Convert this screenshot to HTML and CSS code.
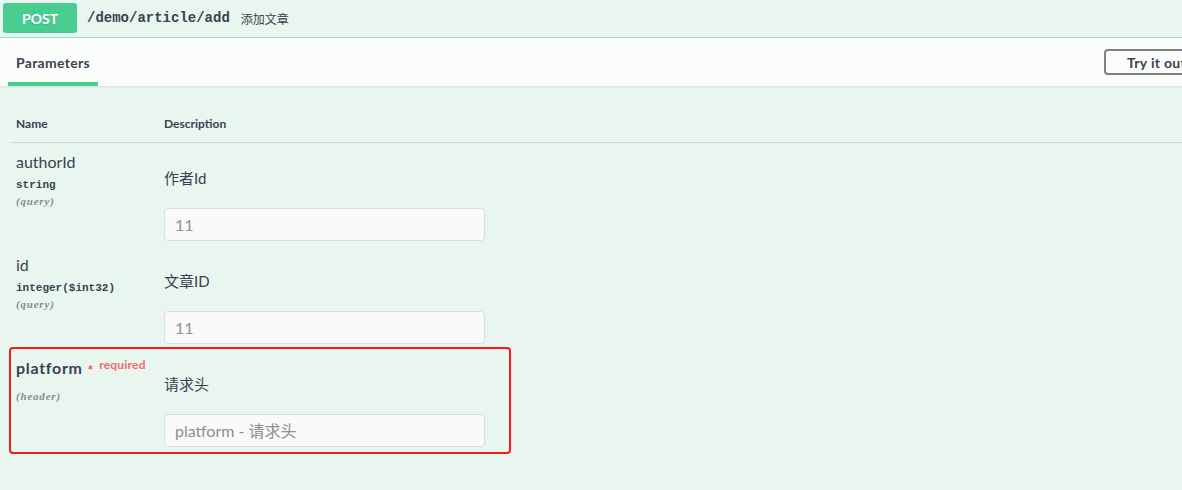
FILE: index.html
```html
<!DOCTYPE html>
<html lang="zh">
<head>
<meta charset="utf-8">
<title>POST /demo/article/add</title>
<link rel="stylesheet" href="styles.css">
</head>
<body>
<div class="opblock">
  <div class="summary">
    <span class="method">POST</span>
    <span class="path">/demo/article/add</span>
    <span class="summary-desc">添加文章</span>
  </div>
  <div class="section-header">
    <div class="tab">Parameters</div>
    <button class="try-out">Try it out</button>
  </div>
  <div class="params">
    <div class="head-row">
      <div class="col-name">Name</div>
      <div class="col-desc">Description</div>
    </div>
    <div class="row">
      <div class="col-name">
        <div class="p-name">authorId</div>
        <div class="p-type">string</div>
        <div class="p-in">(query)</div>
      </div>
      <div class="col-desc">
        <div class="p-desc">作者Id</div>
        <input class="p-input" type="text" placeholder="11">
      </div>
    </div>
    <div class="row">
      <div class="col-name">
        <div class="p-name">id</div>
        <div class="p-type">integer($int32)</div>
        <div class="p-in">(query)</div>
      </div>
      <div class="col-desc">
        <div class="p-desc">文章ID</div>
        <input class="p-input" type="text" placeholder="11">
      </div>
    </div>
    <div class="row highlighted">
      <div class="col-name">
        <div class="p-name required"><span class="req-name">platform</span><span class="star">*</span><span class="req">required</span></div>
        <div class="p-in header-in">(header)</div>
      </div>
      <div class="col-desc">
        <div class="p-desc">请求头</div>
        <input class="p-input" type="text" placeholder="platform - 请求头">
      </div>
    </div>
  </div>
</div>
</body>
</html>
```
FILE: styles.css
```css
html, body {
  margin: 0;
  padding: 0;
  overflow: hidden;
  background: #e8f6ef;
}
body {
  width: 1182px;
  height: 490px;
  font-family: Lato, "Noto Sans CJK SC", sans-serif;
  color: #3b4151;
}
.opblock {
  width: 1240px;
  height: 490px;
  background: #e8f6ef;
}
.summary {
  display: flex;
  align-items: center;
  height: 30px;
  padding: 3px 3px 4px;
  border-bottom: 1px solid #9ddfc0;
}
.method {
  width: 74px;
  height: 30px;
  display: flex;
  align-items: center;
  justify-content: center;
  background: #49cc90;
  color: #fff;
  font-weight: 700;
  font-size: 14px;
  border-radius: 3px;
  text-shadow: 0 1px 0 rgba(0,0,0,.1);
}
.path {
  margin-left: 10px;
  font-family: "Liberation Mono", monospace;
  font-weight: 700;
  font-size: 14px;
  color: #3b4151;
}
.summary-desc {
  margin-left: 11px;
  font-size: 12px;
  color: #3b4151;
}
.section-header {
  display: flex;
  align-items: center;
  height: 48px;
  padding: 0 31px 0 8px;
  background: rgba(255,255,255,.8);
  box-shadow: 0 1px 2px rgba(0,0,0,.08);
}
.tab {
  align-self: stretch;
  display: flex;
  align-items: center;
  padding: 0 8px;
  font-size: 14px;
  font-weight: 700;
  letter-spacing: .3px;
  box-shadow: inset 0 -4px 0 #49cc90;
}
.try-out {
  margin-left: auto;
  height: 26px;
  padding: 0 21px;
  border: 2px solid #808080;
  border-radius: 4px;
  background: transparent;
  font-family: Lato, sans-serif;
  font-weight: 700;
  font-size: 14px;
  letter-spacing: .3px;
  color: #3b4151;
}
.params {
  padding: 1px 0 0 11px;
}
.head-row {
  display: flex;
  align-items: flex-end;
  height: 44px;
  padding: 0 0 11px 5px;
  border-bottom: 1px solid #cdd6d2;
  font-size: 12px;
  font-weight: 700;
}
.col-name {
  width: 148px;
  flex: none;
}
.col-desc {
  flex: none;
  width: 321px;
}
.row {
  display: flex;
  width: 493px;
  height: 103px;
  padding-left: 5px;
  box-sizing: border-box;
}
.row .col-name {
  padding-top: 9px;
}
.p-name {
  font-size: 16px;
  line-height: 20px;
}
.p-name.required {
  font-weight: 700;
}
.req-name {
  letter-spacing: .7px;
}
.star {
  font-family: "DejaVu Sans", sans-serif;
  color: #f22;
  font-size: 11px;
  font-weight: 400;
  margin-left: 5px;
  position: relative;
  top: -1px;
}
.req {
  color: #f56a6a;
  font-size: 12px;
  font-weight: 700;
  letter-spacing: .2px;
  position: relative;
  top: -5px;
  margin-left: 6px;
}
.p-type {
  font-family: "Liberation Mono", monospace;
  font-weight: 700;
  font-size: 11px;
  line-height: 14px;
  margin-top: 6px;
}
.p-in {
  font-family: "Liberation Serif", serif;
  font-style: italic;
  font-weight: 700;
  font-size: 11px;
  line-height: 14px;
  color: #868b93;
  margin-top: 2px;
  letter-spacing: .8px;
}
.header-in {
  margin-top: 8px;
}
.row .col-desc {
  padding-top: 25px;
}
.p-desc {
  font-size: 15px;
  line-height: 20px;
}
.p-input {
  display: block;
  box-sizing: border-box;
  width: 321px;
  height: 33px;
  margin-top: 20px;
  padding: 0 10px;
  border: 1px solid #dcdcdc;
  border-radius: 4px;
  background: #fafafa;
  font-family: Lato, "Noto Sans CJK SC", sans-serif;
  font-size: 16px;
  color: #3b4151;
  outline: none;
}
.p-input::placeholder {
  color: #8f8f8f;
}
.highlighted {
  outline: 2px solid #f21a12;
  border-radius: 2px;
  width: 498px;
}
```
